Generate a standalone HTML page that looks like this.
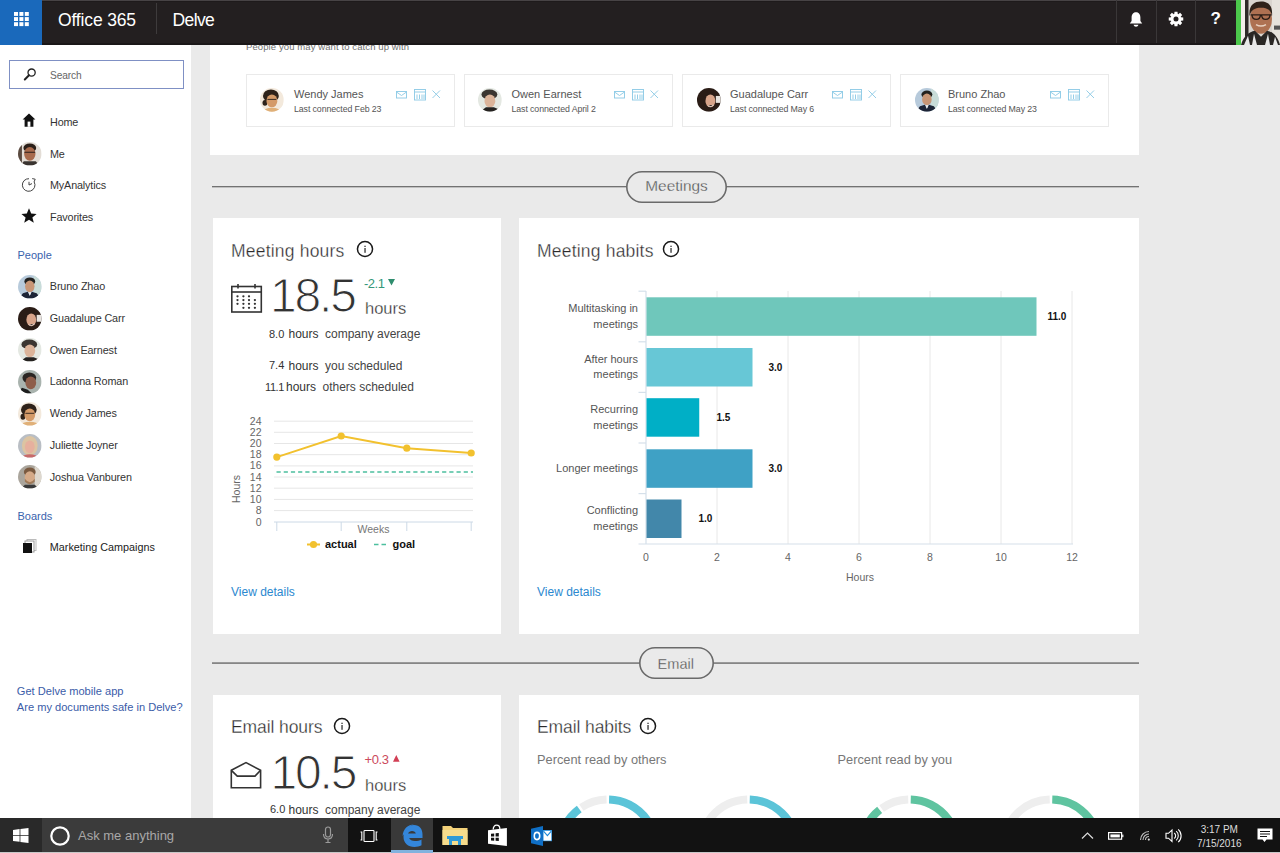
<!DOCTYPE html>
<html><head><meta charset="utf-8"><title>Delve</title>
<style>
*{margin:0;padding:0;box-sizing:border-box}
html,body{width:1280px;height:853px;overflow:hidden}
body{position:relative;background:#eaeaea;font-family:"Liberation Sans",sans-serif}
.t{position:absolute;white-space:nowrap;line-height:1}
.r{position:absolute}
svg{position:absolute;overflow:visible}
</style></head><body>
<div class="r" style="left:0px;top:44px;width:191px;height:809px;background:#ffffff;"></div>
<div class="r" style="left:210px;top:44px;width:929px;height:111px;background:#ffffff;"></div>
<div class="t" style="left:246.00px;top:42px;font-size:9.5px;color:#707070;letter-spacing:0.1px;">People you may want to catch up with</div>
<div class="r" style="left:246px;top:74px;width:209px;height:53px;background:#ffffff;border:1px solid #eaeaea;"></div>
<svg style="left:259.6px;top:88.0px" width="23.8" height="23.8" viewBox="0 0 24 24"><defs><clipPath id="c1"><circle cx="12" cy="12" r="12"/></clipPath></defs><g clip-path="url(#c1)"><rect width="24" height="24" fill="#f3e9dc"/><ellipse cx="11" cy="8" rx="8" ry="6.5" fill="#2e221a"/><ellipse cx="5" cy="15" rx="2.5" ry="3" fill="#2e221a"/><ellipse cx="12" cy="13" rx="5.5" ry="6.5" fill="#d49a68"/><path d="M7.5 11.5 H16.5" stroke="#3a2a20" stroke-width="1"/><ellipse cx="12" cy="24" rx="9" ry="4" fill="#e0b078"/></g></svg>
<div class="t" style="left:294.00px;top:89px;font-size:11px;color:#555;">Wendy James</div>
<div class="t" style="left:294.00px;top:105px;font-size:8.8px;color:#555;letter-spacing:-0.1px;">Last connected Feb 23</div>
<svg style="left:396px;top:89px" width="46" height="12" viewBox="0 0 46 12">
<g fill="none" stroke="#8fcbe6" stroke-width="0.95">
<rect x="0.5" y="2.5" width="10" height="6.5"/><path d="M0.5 3 L5.5 6.5 L10.5 3"/>
<rect x="18.5" y="0.5" width="11" height="10.5"/><path d="M18.5 3 H29.5 M21 5.5 V10 M23.5 5.5 V10 M26 5.5 V10 M28 5.5V10"/>
<path d="M36.5 1.5 L44 9 M44 1.5 L36.5 9"/>
</g></svg>
<div class="r" style="left:463.5px;top:74px;width:209px;height:53px;background:#ffffff;border:1px solid #eaeaea;"></div>
<svg style="left:478.3px;top:88.0px" width="23.8" height="23.8" viewBox="0 0 24 24"><defs><clipPath id="c2"><circle cx="12" cy="12" r="12"/></clipPath></defs><g clip-path="url(#c2)"><rect width="24" height="24" fill="#e4e8e2"/><ellipse cx="11.5" cy="6.5" rx="8" ry="5" fill="#3b3631"/><ellipse cx="12" cy="13" rx="5.5" ry="6.5" fill="#dcb49a"/><path d="M2 24 L8 19.5 H16 L22 22 V24Z" fill="#252220"/></g></svg>
<div class="t" style="left:511.50px;top:89px;font-size:11px;color:#555;">Owen Earnest</div>
<div class="t" style="left:511.50px;top:105px;font-size:8.8px;color:#555;letter-spacing:-0.1px;">Last connected April 2</div>
<svg style="left:613.5px;top:89px" width="46" height="12" viewBox="0 0 46 12">
<g fill="none" stroke="#8fcbe6" stroke-width="0.95">
<rect x="0.5" y="2.5" width="10" height="6.5"/><path d="M0.5 3 L5.5 6.5 L10.5 3"/>
<rect x="18.5" y="0.5" width="11" height="10.5"/><path d="M18.5 3 H29.5 M21 5.5 V10 M23.5 5.5 V10 M26 5.5 V10 M28 5.5V10"/>
<path d="M36.5 1.5 L44 9 M44 1.5 L36.5 9"/>
</g></svg>
<div class="r" style="left:682px;top:74px;width:209px;height:53px;background:#ffffff;border:1px solid #eaeaea;"></div>
<svg style="left:697.1px;top:88.0px" width="23.8" height="23.8" viewBox="0 0 24 24"><defs><clipPath id="c3"><circle cx="12" cy="12" r="12"/></clipPath></defs><g clip-path="url(#c3)"><rect width="24" height="24" fill="#2a1c16"/><ellipse cx="13.5" cy="13" rx="5" ry="6.5" fill="#d8a48a"/><rect x="19" y="8" width="5" height="7" fill="#e8e4e0"/><path d="M11 18 Q14 20 17 17" stroke="#f0e0d8" stroke-width="1"/></g></svg>
<div class="t" style="left:730.00px;top:89px;font-size:11px;color:#555;">Guadalupe Carr</div>
<div class="t" style="left:730.00px;top:105px;font-size:8.8px;color:#555;letter-spacing:-0.1px;">Last connected May 6</div>
<svg style="left:832px;top:89px" width="46" height="12" viewBox="0 0 46 12">
<g fill="none" stroke="#8fcbe6" stroke-width="0.95">
<rect x="0.5" y="2.5" width="10" height="6.5"/><path d="M0.5 3 L5.5 6.5 L10.5 3"/>
<rect x="18.5" y="0.5" width="11" height="10.5"/><path d="M18.5 3 H29.5 M21 5.5 V10 M23.5 5.5 V10 M26 5.5 V10 M28 5.5V10"/>
<path d="M36.5 1.5 L44 9 M44 1.5 L36.5 9"/>
</g></svg>
<div class="r" style="left:900px;top:74px;width:209px;height:53px;background:#ffffff;border:1px solid #eaeaea;"></div>
<svg style="left:914.7px;top:88.0px" width="23.8" height="23.8" viewBox="0 0 24 24"><defs><clipPath id="c4"><circle cx="12" cy="12" r="12"/></clipPath></defs><g clip-path="url(#c4)"><rect width="24" height="24" fill="#b7cadb"/><rect x="16" y="0" width="8" height="24" fill="#c8dcd8"/><ellipse cx="12" cy="6.5" rx="5.5" ry="4" fill="#22211f"/><ellipse cx="12" cy="11.5" rx="4.8" ry="6" fill="#c89676"/><path d="M1 24 L5 18.5 L10 17 L12 21 L14 17 L19 18.5 L23 24Z" fill="#1d2436"/><path d="M10.5 17.5 L12 21 L13.5 17.5Z" fill="#eee"/></g></svg>
<div class="t" style="left:948.00px;top:89px;font-size:11px;color:#555;">Bruno Zhao</div>
<div class="t" style="left:948.00px;top:105px;font-size:8.8px;color:#555;letter-spacing:-0.1px;">Last connected May 23</div>
<svg style="left:1050px;top:89px" width="46" height="12" viewBox="0 0 46 12">
<g fill="none" stroke="#8fcbe6" stroke-width="0.95">
<rect x="0.5" y="2.5" width="10" height="6.5"/><path d="M0.5 3 L5.5 6.5 L10.5 3"/>
<rect x="18.5" y="0.5" width="11" height="10.5"/><path d="M18.5 3 H29.5 M21 5.5 V10 M23.5 5.5 V10 M26 5.5 V10 M28 5.5V10"/>
<path d="M36.5 1.5 L44 9 M44 1.5 L36.5 9"/>
</g></svg>
<div class="r" style="left:212px;top:186px;width:927px;height:1px;background:#727272;"></div>
<div class="r" style="left:212px;top:187px;width:927px;height:1px;background:#c0c0c0;"></div>
<svg style="left:626px;top:170.5px" width="101" height="32" viewBox="0 0 101 32"><rect x="0.8" y="0.8" width="99.4" height="30.4" rx="15.2" fill="#eaeaea" stroke="#6a6a6a" stroke-width="1.6"/></svg>
<div class="t" style="left:645.30px;top:178px;font-size:15.4px;color:#4a4a4a;-webkit-text-stroke:0.3px #eaeaea;">Meetings</div>
<div class="r" style="left:212px;top:662px;width:927px;height:1px;background:#9a9a9a;"></div>
<div class="r" style="left:212px;top:663px;width:927px;height:1px;background:#868686;"></div>
<svg style="left:639px;top:646.7px" width="75" height="32" viewBox="0 0 75 32"><rect x="0.8" y="0.8" width="73.4" height="30.4" rx="15.2" fill="#eaeaea" stroke="#6a6a6a" stroke-width="1.6"/></svg>
<div class="t" style="left:657.50px;top:657px;font-size:14.6px;color:#4a4a4a;-webkit-text-stroke:0.3px #eaeaea;">Email</div>
<div class="r" style="left:213px;top:218px;width:288px;height:416px;background:#ffffff;"></div>
<div class="r" style="left:519px;top:218px;width:620px;height:416px;background:#ffffff;"></div>
<div class="r" style="left:213px;top:695px;width:288px;height:160px;background:#ffffff;"></div>
<div class="r" style="left:519px;top:695px;width:620px;height:160px;background:#ffffff;"></div>
<div class="t" style="left:231.00px;top:243px;font-size:17.5px;color:#2a2a2a;letter-spacing:0.2px;-webkit-text-stroke:0.3px #fff;">Meeting hours</div>
<svg style="left:355.5px;top:240px" width="18" height="18" viewBox="0 0 18 18">
<circle cx="9" cy="9" r="7.55" fill="none" stroke="#1a1a1a" stroke-width="1.5"/>
<rect x="8.45" y="8" width="1.15" height="4.8" fill="#1a1a1a"/><rect x="8.45" y="5.7" width="1.15" height="1.3" fill="#1a1a1a"/>
</svg>
<svg style="left:230px;top:283px" width="34" height="32" viewBox="0 0 34 32">
<g fill="none" stroke="#333" stroke-width="1.6">
<rect x="1.8" y="3.5" width="29.5" height="25.5"/>
<path d="M1.8 9 H31.3"/>
<path d="M8 1 V5.5 M25 1 V5.5"/>
</g>
<g fill="#333">
<circle cx="7.5" cy="13.3" r="1.15"/><circle cx="13.4" cy="13.3" r="1.15"/><circle cx="19" cy="13.3" r="1.15"/><circle cx="7.5" cy="17.1" r="1.15"/><circle cx="13.4" cy="17.1" r="1.15"/><circle cx="19" cy="17.1" r="1.15"/><circle cx="24.9" cy="17.1" r="1.15"/><circle cx="7.5" cy="20.8" r="1.15"/><circle cx="13.4" cy="20.8" r="1.15"/><circle cx="19" cy="20.8" r="1.15"/><circle cx="24.9" cy="20.8" r="1.15"/><circle cx="13.4" cy="24.8" r="1.15"/><circle cx="19" cy="24.8" r="1.15"/><circle cx="24.9" cy="24.8" r="1.15"/>
</g></svg>
<div class="t" style="left:270.00px;top:272px;font-size:48px;color:#333;letter-spacing:-2.2px;-webkit-text-stroke:1.1px #fff;">18.5</div>
<div class="t" style="left:364.00px;top:277px;font-size:13px;color:#34977a;letter-spacing:-0.5px;">-2.1</div>
<svg style="left:388.3px;top:279.2px" width="7" height="6.5" viewBox="0 0 7 6.5"><path d="M0 0 H7 L3.5 6.5Z" fill="#2f8d6e"/></svg>
<div class="t" style="left:365.00px;top:300px;font-size:16.5px;color:#2a2a2a;-webkit-text-stroke:0.3px #fff;">hours</div>
<div class="t" style="left:269.00px;top:329px;font-size:11px;color:#333;">8.0</div>
<div class="t" style="left:288.50px;top:328px;font-size:12px;color:#333;">hours</div>
<div class="t" style="left:325.00px;top:328px;font-size:12px;color:#444;">company average</div>
<div class="t" style="left:269.00px;top:360px;font-size:11px;color:#333;">7.4</div>
<div class="t" style="left:288.50px;top:360px;font-size:12px;color:#333;">hours</div>
<div class="t" style="left:325.00px;top:360px;font-size:12px;color:#444;">you scheduled</div>
<div class="t" style="left:265.00px;top:382px;font-size:11px;color:#333;letter-spacing:-0.4px;">11.1</div>
<div class="t" style="left:286.00px;top:381px;font-size:12px;color:#333;">hours</div>
<div class="t" style="left:322.50px;top:381px;font-size:12px;color:#444;">others scheduled</div>
<svg style="left:0px;top:0px" width="1" height="1">
<path d="M274 421.2 H473" stroke="#e6e6e6" stroke-width="1"/>
<path d="M274 432.3 H473" stroke="#e6e6e6" stroke-width="1"/>
<path d="M274 443.5 H473" stroke="#e6e6e6" stroke-width="1"/>
<path d="M274 454.7 H473" stroke="#e6e6e6" stroke-width="1"/>
<path d="M274 465.9 H473" stroke="#e6e6e6" stroke-width="1"/>
<path d="M274 477.0 H473" stroke="#e6e6e6" stroke-width="1"/>
<path d="M274 488.2 H473" stroke="#e6e6e6" stroke-width="1"/>
<path d="M274 499.4 H473" stroke="#e6e6e6" stroke-width="1"/>
<path d="M274 510.6 H473" stroke="#e6e6e6" stroke-width="1"/>
<path d="M274 522 H473" stroke="#ccd9e6" stroke-width="1"/>
<path d="M276.8 522 V531" stroke="#ccd9e6" stroke-width="1"/>
<path d="M341.2 522 V531" stroke="#ccd9e6" stroke-width="1"/>
<path d="M406.8 522 V531" stroke="#ccd9e6" stroke-width="1"/>
<path d="M471.2 522 V531" stroke="#ccd9e6" stroke-width="1"/>
<path d="M276.5 472 H473" stroke="#4cbf9e" stroke-width="1.6" stroke-dasharray="4.2 3"/>
<polyline points="276.8,457.1 341.2,436 406.8,448.2 471.2,453" fill="none" stroke="#f2c12e" stroke-width="2"/>
<circle cx="276.8" cy="457.1" r="3.6" fill="#f2c12e"/>
<circle cx="341.2" cy="436" r="3.6" fill="#f2c12e"/>
<circle cx="406.8" cy="448.2" r="3.6" fill="#f2c12e"/>
<circle cx="471.2" cy="453" r="3.6" fill="#f2c12e"/>
<path d="M307 544.5 H320" stroke="#f2c12e" stroke-width="2"/><circle cx="313.5" cy="544.5" r="3.6" fill="#f2c12e"/>
<path d="M374 544.5 H387" stroke="#4cbf9e" stroke-width="1.6" stroke-dasharray="4.5 3"/>
</svg>
<div class="t" style="right:1018.50px;top:416px;font-size:10.5px;color:#666;text-align:right;">24</div>
<div class="t" style="right:1018.50px;top:427px;font-size:10.5px;color:#666;text-align:right;">22</div>
<div class="t" style="right:1018.50px;top:438px;font-size:10.5px;color:#666;text-align:right;">20</div>
<div class="t" style="right:1018.50px;top:449px;font-size:10.5px;color:#666;text-align:right;">18</div>
<div class="t" style="right:1018.50px;top:460px;font-size:10.5px;color:#666;text-align:right;">16</div>
<div class="t" style="right:1018.50px;top:472px;font-size:10.5px;color:#666;text-align:right;">14</div>
<div class="t" style="right:1018.50px;top:483px;font-size:10.5px;color:#666;text-align:right;">12</div>
<div class="t" style="right:1018.50px;top:494px;font-size:10.5px;color:#666;text-align:right;">10</div>
<div class="t" style="right:1018.50px;top:505px;font-size:10.5px;color:#666;text-align:right;">8</div>
<div class="t" style="right:1018.50px;top:517px;font-size:10.5px;color:#666;text-align:right;">0</div>
<div class="t" style="left:173.50px;width:400px;text-align:center;top:524px;font-size:10.5px;color:#777;">Weeks</div>
<div class="t" style="left:216px;top:482px;width:40px;text-align:center;font-size:10.5px;color:#666;transform:rotate(-90deg);transform-origin:20px 7px;top:482px;margin-left:2px;">Hours</div>
<div class="t" style="left:325.00px;top:539px;font-size:11px;color:#111;font-weight:bold;">actual</div>
<div class="t" style="left:392.50px;top:539px;font-size:11px;color:#111;font-weight:bold;">goal</div>
<div class="t" style="left:231.00px;top:586px;font-size:12px;color:#2b88cf;">View details</div>
<div class="t" style="left:537.00px;top:243px;font-size:17.5px;color:#2a2a2a;letter-spacing:0.2px;-webkit-text-stroke:0.3px #fff;">Meeting habits</div>
<svg style="left:662px;top:240px" width="18" height="18" viewBox="0 0 18 18">
<circle cx="9" cy="9" r="7.55" fill="none" stroke="#1a1a1a" stroke-width="1.5"/>
<rect x="8.45" y="8" width="1.15" height="4.8" fill="#1a1a1a"/><rect x="8.45" y="5.7" width="1.15" height="1.3" fill="#1a1a1a"/>
</svg>
<svg style="left:0;top:0" width="1" height="1">
<path d="M717.0 291 V544" stroke="#e8e8e8" stroke-width="1"/>
<path d="M788.0 291 V544" stroke="#e8e8e8" stroke-width="1"/>
<path d="M859.0 291 V544" stroke="#e8e8e8" stroke-width="1"/>
<path d="M930.0 291 V544" stroke="#e8e8e8" stroke-width="1"/>
<path d="M1001.0 291 V544" stroke="#e8e8e8" stroke-width="1"/>
<path d="M1072.0 291 V544" stroke="#e8e8e8" stroke-width="1"/>
<path d="M646 291 V544 M638.5 544 H1073" stroke="#d5e0ea" stroke-width="1.2"/>
<path d="M638.5 291.2 H646" stroke="#d5e0ea" stroke-width="1.2"/>
<path d="M638.5 341.8 H646" stroke="#d5e0ea" stroke-width="1.2"/>
<path d="M638.5 392.4 H646" stroke="#d5e0ea" stroke-width="1.2"/>
<path d="M638.5 443 H646" stroke="#d5e0ea" stroke-width="1.2"/>
<path d="M638.5 493.6 H646" stroke="#d5e0ea" stroke-width="1.2"/>
<rect x="646.5" y="297.3" width="390.0" height="38.5" fill="#6fc7bb"/>
<rect x="646.5" y="348" width="106.0" height="38.5" fill="#67c7d6"/>
<rect x="646.5" y="398.2" width="52.75" height="38.5" fill="#00afc6"/>
<rect x="646.5" y="449.3" width="106.0" height="38.5" fill="#3fa1c5"/>
<rect x="646.5" y="499.5" width="35.0" height="38.5" fill="#4287aa"/>
</svg>
<div class="t" style="left:1047.50px;top:312px;font-size:10px;color:#111;font-weight:bold;">11.0</div>
<div class="t" style="left:768.50px;top:363px;font-size:10px;color:#111;font-weight:bold;">3.0</div>
<div class="t" style="left:716.50px;top:413px;font-size:10px;color:#111;font-weight:bold;">1.5</div>
<div class="t" style="left:768.50px;top:464px;font-size:10px;color:#111;font-weight:bold;">3.0</div>
<div class="t" style="left:698.50px;top:514px;font-size:10px;color:#111;font-weight:bold;">1.0</div>
<div class="t" style="right:642.00px;top:303px;font-size:11px;color:#555;text-align:right;">Multitasking in</div>
<div class="t" style="right:642.00px;top:319px;font-size:11px;color:#555;text-align:right;">meetings</div>
<div class="t" style="right:642.00px;top:354px;font-size:11px;color:#555;text-align:right;">After hours</div>
<div class="t" style="right:642.00px;top:369px;font-size:11px;color:#555;text-align:right;">meetings</div>
<div class="t" style="right:642.00px;top:404px;font-size:11px;color:#555;text-align:right;">Recurring</div>
<div class="t" style="right:642.00px;top:420px;font-size:11px;color:#555;text-align:right;">meetings</div>
<div class="t" style="right:642.00px;top:463px;font-size:11px;color:#555;text-align:right;">Longer meetings</div>
<div class="t" style="right:642.00px;top:505px;font-size:11px;color:#555;text-align:right;">Conflicting</div>
<div class="t" style="right:642.00px;top:521px;font-size:11px;color:#555;text-align:right;">meetings</div>
<div class="t" style="left:446.00px;width:400px;text-align:center;top:552px;font-size:10.5px;color:#666;">0</div>
<div class="t" style="left:517.00px;width:400px;text-align:center;top:552px;font-size:10.5px;color:#666;">2</div>
<div class="t" style="left:588.00px;width:400px;text-align:center;top:552px;font-size:10.5px;color:#666;">4</div>
<div class="t" style="left:659.00px;width:400px;text-align:center;top:552px;font-size:10.5px;color:#666;">6</div>
<div class="t" style="left:730.00px;width:400px;text-align:center;top:552px;font-size:10.5px;color:#666;">8</div>
<div class="t" style="left:801.00px;width:400px;text-align:center;top:552px;font-size:10.5px;color:#666;">10</div>
<div class="t" style="left:872.00px;width:400px;text-align:center;top:552px;font-size:10.5px;color:#666;">12</div>
<div class="t" style="left:660.00px;width:400px;text-align:center;top:572px;font-size:10.5px;color:#666;">Hours</div>
<div class="t" style="left:537.00px;top:586px;font-size:12px;color:#2b88cf;">View details</div>
<div class="t" style="left:231.00px;top:719px;font-size:17.5px;color:#2a2a2a;letter-spacing:-0.1px;-webkit-text-stroke:0.3px #fff;">Email hours</div>
<svg style="left:332.5px;top:716.5px" width="18" height="18" viewBox="0 0 18 18">
<circle cx="9" cy="9" r="7.55" fill="none" stroke="#1a1a1a" stroke-width="1.5"/>
<rect x="8.45" y="8" width="1.15" height="4.8" fill="#1a1a1a"/><rect x="8.45" y="5.7" width="1.15" height="1.3" fill="#1a1a1a"/>
</svg>
<svg style="left:229px;top:760px" width="34" height="30" viewBox="0 0 34 30">
<g fill="none" stroke="#333" stroke-width="1.6" stroke-linejoin="miter">
<path d="M2.3 10.3 L17 2.6 L31.6 10.3 V27.7 H2.3 Z"/>
<path d="M2.3 10.3 L8.3 16.1 H26 L31.6 10.3"/>
</g></svg>
<div class="t" style="left:270.50px;top:749px;font-size:48px;color:#333;letter-spacing:-2.2px;-webkit-text-stroke:1.1px #fff;">10.5</div>
<div class="t" style="left:364.50px;top:753px;font-size:13px;color:#cc4a5c;letter-spacing:-0.4px;">+0.3</div>
<svg style="left:392.6px;top:754.5px" width="6.6" height="6.8" viewBox="0 0 6.6 6.8"><path d="M3.3 0 L6.6 6.8 H0Z" fill="#d23f55"/></svg>
<div class="t" style="left:365.00px;top:777px;font-size:16.5px;color:#2a2a2a;-webkit-text-stroke:0.3px #fff;">hours</div>
<div class="t" style="left:270.00px;top:804px;font-size:11px;color:#333;">6.0</div>
<div class="t" style="left:288.50px;top:804px;font-size:12px;color:#333;">hours</div>
<div class="t" style="left:325.00px;top:804px;font-size:12px;color:#444;">company average</div>
<div class="t" style="left:537.00px;top:719px;font-size:17.5px;color:#2a2a2a;letter-spacing:-0.1px;-webkit-text-stroke:0.3px #fff;">Email habits</div>
<svg style="left:638.8px;top:717px" width="18" height="18" viewBox="0 0 18 18">
<circle cx="9" cy="9" r="7.55" fill="none" stroke="#1a1a1a" stroke-width="1.5"/>
<rect x="8.45" y="8" width="1.15" height="4.8" fill="#1a1a1a"/><rect x="8.45" y="5.7" width="1.15" height="1.3" fill="#1a1a1a"/>
</svg>
<div class="t" style="left:537.00px;top:754px;font-size:12.8px;color:#777;">Percent read by others</div>
<div class="t" style="left:837.50px;top:754px;font-size:12.8px;color:#777;">Percent read by you</div>
<svg style="left:0;top:0" width="1" height="1">
<path d="M581.31 807.47 A48 48 0 0 1 606.54 799.52" fill="none" stroke="#eeeeee" stroke-width="8"/>
<path d="M609.06 799.52 A48 48 0 1 1 579.25 808.91" fill="none" stroke="#5bc4d8" stroke-width="8"/>
<path d="M701.03 854.59 A48 48 0 0 1 747.24 799.52" fill="none" stroke="#eeeeee" stroke-width="8"/>
<path d="M749.76 799.52 A48 48 0 1 1 701.46 857.07" fill="none" stroke="#5bc4d8" stroke-width="8"/>
<path d="M881.63 808.42 A48 48 0 0 1 908.24 799.52" fill="none" stroke="#eeeeee" stroke-width="8"/>
<path d="M910.76 799.52 A48 48 0 1 1 879.62 809.93" fill="none" stroke="#5fc4a0" stroke-width="8"/>
<path d="M1003.53 854.59 A48 48 0 0 1 1049.74 799.52" fill="none" stroke="#eeeeee" stroke-width="8"/>
<path d="M1052.26 799.52 A48 48 0 1 1 1003.96 857.07" fill="none" stroke="#5fc4a0" stroke-width="8"/>
</svg>
<div class="r" style="left:9px;top:60px;width:175px;height:29px;background:transparent;border:1.3px solid #7f90c4;"></div>
<svg style="left:22px;top:66px" width="16" height="16" viewBox="0 0 16 16">
<circle cx="9.6" cy="6.6" r="3.6" fill="none" stroke="#222" stroke-width="1.3"/>
<path d="M7 9.3 L2.8 13.5" stroke="#222" stroke-width="2" stroke-linecap="round"/>
</svg>
<div class="t" style="left:50.00px;top:71px;font-size:10.2px;color:#666;letter-spacing:-0.1px;">Search</div>
<svg style="left:21px;top:112px" width="16" height="16" viewBox="0 0 16 16">
<path d="M8 1.5 L1.6 7.6 H3.6 V14.8 H12.4 V7.6 H14.4 Z" fill="#111"/>
<rect x="6.6" y="9.6" width="2.8" height="5.2" fill="#fff"/>
</svg>
<div class="t" style="left:50.00px;top:117px;font-size:10.8px;color:#333;letter-spacing:-0.15px;">Home</div>
<svg style="left:18.2px;top:142.0px" width="23.6" height="23.6" viewBox="0 0 24 24"><defs><clipPath id="c5"><circle cx="12" cy="12" r="12"/></clipPath></defs><g clip-path="url(#c5)"><rect width="24" height="24" fill="#e3ddd6"/><rect x="0" y="0" width="4" height="24" fill="#5a4a40"/><ellipse cx="12" cy="6" rx="6.5" ry="4.5" fill="#2b1f18"/><ellipse cx="12" cy="12" rx="5.8" ry="7" fill="#a86a4c"/><path d="M6.5 10.5 H17.5" stroke="#2a1e18" stroke-width="1.1"/><path d="M2 24 L6 19.5 H18 L22 24Z" fill="#3a3430"/></g></svg>
<div class="t" style="left:50.00px;top:149px;font-size:10.8px;color:#333;letter-spacing:-0.15px;">Me</div>
<svg style="left:20px;top:176px" width="18" height="18" viewBox="0 0 18 18">
<path d="M14.2 6 A6.3 6.3 0 1 1 9 2.7" fill="none" stroke="#444" stroke-width="1"/>
<path d="M9 9 L9 5.8 M9 9 L12 7.6" stroke="#444" stroke-width="1"/>
<path d="M12.2 2.6 L15.2 3.2 L14 6" fill="none" stroke="#444" stroke-width="1"/>
</svg>
<div class="t" style="left:50.00px;top:180px;font-size:10.8px;color:#333;letter-spacing:-0.15px;">MyAnalytics</div>
<svg style="left:20px;top:207px" width="18" height="18" viewBox="0 0 18 18">
<path d="M9 1.3 L11.2 6.6 L16.6 6.9 L12.4 10.4 L13.8 15.8 L9 12.8 L4.2 15.8 L5.6 10.4 L1.4 6.9 L6.8 6.6 Z" fill="#111"/>
</svg>
<div class="t" style="left:50.00px;top:212px;font-size:10.8px;color:#333;letter-spacing:-0.15px;">Favorites</div>
<div class="t" style="left:17.50px;top:250px;font-size:11px;color:#3a63ad;">People</div>
<svg style="left:17.8px;top:275.0px" width="23.6" height="23.6" viewBox="0 0 24 24"><defs><clipPath id="c6"><circle cx="12" cy="12" r="12"/></clipPath></defs><g clip-path="url(#c6)"><rect width="24" height="24" fill="#b7cadb"/><rect x="16" y="0" width="8" height="24" fill="#c8dcd8"/><ellipse cx="12" cy="6.5" rx="5.5" ry="4" fill="#22211f"/><ellipse cx="12" cy="11.5" rx="4.8" ry="6" fill="#c89676"/><path d="M1 24 L5 18.5 L10 17 L12 21 L14 17 L19 18.5 L23 24Z" fill="#1d2436"/><path d="M10.5 17.5 L12 21 L13.5 17.5Z" fill="#eee"/></g></svg>
<div class="t" style="left:49.80px;top:281px;font-size:10.8px;color:#333;letter-spacing:-0.12px;">Bruno Zhao</div>
<svg style="left:17.8px;top:306.7px" width="23.6" height="23.6" viewBox="0 0 24 24"><defs><clipPath id="c7"><circle cx="12" cy="12" r="12"/></clipPath></defs><g clip-path="url(#c7)"><rect width="24" height="24" fill="#2a1c16"/><ellipse cx="13.5" cy="13" rx="5" ry="6.5" fill="#d8a48a"/><rect x="19" y="8" width="5" height="7" fill="#e8e4e0"/><path d="M11 18 Q14 20 17 17" stroke="#f0e0d8" stroke-width="1"/></g></svg>
<div class="t" style="left:49.80px;top:313px;font-size:10.8px;color:#333;letter-spacing:-0.12px;">Guadalupe Carr</div>
<svg style="left:17.8px;top:338.4px" width="23.6" height="23.6" viewBox="0 0 24 24"><defs><clipPath id="c8"><circle cx="12" cy="12" r="12"/></clipPath></defs><g clip-path="url(#c8)"><rect width="24" height="24" fill="#e4e8e2"/><ellipse cx="11.5" cy="6.5" rx="8" ry="5" fill="#3b3631"/><ellipse cx="12" cy="13" rx="5.5" ry="6.5" fill="#dcb49a"/><path d="M2 24 L8 19.5 H16 L22 22 V24Z" fill="#252220"/></g></svg>
<div class="t" style="left:49.80px;top:345px;font-size:10.8px;color:#333;letter-spacing:-0.12px;">Owen Earnest</div>
<svg style="left:17.8px;top:370.09999999999997px" width="23.6" height="23.6" viewBox="0 0 24 24"><defs><clipPath id="c9"><circle cx="12" cy="12" r="12"/></clipPath></defs><g clip-path="url(#c9)"><rect width="24" height="24" fill="#a9b3ae"/><ellipse cx="11.5" cy="8" rx="7" ry="5.5" fill="#2a2623"/><ellipse cx="13" cy="13" rx="5.5" ry="6.5" fill="#8e5e4a"/><path d="M0 24 L4 18 L10 20 L14 24Z" fill="#1e1e1e"/></g></svg>
<div class="t" style="left:49.80px;top:376px;font-size:10.8px;color:#333;letter-spacing:-0.12px;">Ladonna Roman</div>
<svg style="left:17.8px;top:401.8px" width="23.6" height="23.6" viewBox="0 0 24 24"><defs><clipPath id="c10"><circle cx="12" cy="12" r="12"/></clipPath></defs><g clip-path="url(#c10)"><rect width="24" height="24" fill="#f3e9dc"/><ellipse cx="11" cy="8" rx="8" ry="6.5" fill="#2e221a"/><ellipse cx="5" cy="15" rx="2.5" ry="3" fill="#2e221a"/><ellipse cx="12" cy="13" rx="5.5" ry="6.5" fill="#d49a68"/><path d="M7.5 11.5 H16.5" stroke="#3a2a20" stroke-width="1"/><ellipse cx="12" cy="24" rx="9" ry="4" fill="#e0b078"/></g></svg>
<div class="t" style="left:49.80px;top:408px;font-size:10.8px;color:#333;letter-spacing:-0.12px;">Wendy James</div>
<svg style="left:17.8px;top:433.5px" width="23.6" height="23.6" viewBox="0 0 24 24"><defs><clipPath id="c11"><circle cx="12" cy="12" r="12"/></clipPath></defs><g clip-path="url(#c11)"><rect width="24" height="24" fill="#b9bec4"/><ellipse cx="12" cy="12" rx="8" ry="10" fill="#dcc4a2"/><ellipse cx="12" cy="13" rx="5" ry="6.5" fill="#e6b09e"/><ellipse cx="12" cy="24" rx="8" ry="3.5" fill="#c86a6a"/></g></svg>
<div class="t" style="left:49.80px;top:440px;font-size:10.8px;color:#333;letter-spacing:-0.12px;">Juliette Joyner</div>
<svg style="left:17.8px;top:465.2px" width="23.6" height="23.6" viewBox="0 0 24 24"><defs><clipPath id="c12"><circle cx="12" cy="12" r="12"/></clipPath></defs><g clip-path="url(#c12)"><rect width="24" height="24" fill="#aaa59c"/><rect x="17" y="0" width="7" height="24" fill="#ded8ce"/><ellipse cx="12" cy="7" rx="6" ry="4.5" fill="#7a5a40"/><ellipse cx="12" cy="12.5" rx="5.2" ry="6.2" fill="#d5aa88"/><path d="M7 14 Q12 21 17 14 V17 Q12 22 7 17Z" fill="#a07a58"/><path d="M3 24 L7 20 H17 L21 24Z" fill="#3a3a3a"/></g></svg>
<div class="t" style="left:49.80px;top:472px;font-size:10.8px;color:#333;letter-spacing:-0.12px;">Joshua Vanburen</div>
<div class="t" style="left:17.50px;top:511px;font-size:11px;color:#3a63ad;">Boards</div>
<svg style="left:22px;top:538px" width="16" height="17" viewBox="0 0 16 17">
<rect x="5" y="1.5" width="9" height="11" fill="none" stroke="#bbb" stroke-width="1"/>
<rect x="3" y="3" width="9" height="11" fill="#fff" stroke="#999" stroke-width="1"/>
<rect x="1" y="5" width="9" height="10" fill="#111"/>
</svg>
<div class="t" style="left:49.80px;top:542px;font-size:10.8px;color:#222;">Marketing Campaigns</div>
<div class="t" style="left:16.80px;top:686px;font-size:11.1px;color:#3a5ca8;">Get Delve mobile app</div>
<div class="t" style="left:16.80px;top:702px;font-size:11.1px;color:#3a5ca8;">Are my documents safe in Delve?</div>
<div class="r" style="left:0px;top:0px;width:1280px;height:45px;background:#231f20;"></div>
<div class="r" style="left:0px;top:43px;width:1280px;height:2px;background:#1a1718;"></div>
<div class="r" style="left:41px;top:0px;width:1195px;height:1px;background:#474345;"></div>
<div class="r" style="left:41px;top:1px;width:1195px;height:1px;background:#1e1a1b;"></div>
<div class="r" style="left:0px;top:0px;width:41.5px;height:45px;background:#1a69bb;"></div>
<svg style="left:14px;top:12px" width="16" height="15" viewBox="0 0 16 15"><rect x="0.0" y="0.0" width="4" height="3.9" fill="#fff"/><rect x="5.4" y="0.0" width="4" height="3.9" fill="#fff"/><rect x="10.8" y="0.0" width="4" height="3.9" fill="#fff"/><rect x="0.0" y="5.1" width="4" height="3.9" fill="#fff"/><rect x="5.4" y="5.1" width="4" height="3.9" fill="#fff"/><rect x="10.8" y="5.1" width="4" height="3.9" fill="#fff"/><rect x="0.0" y="10.2" width="4" height="3.9" fill="#fff"/><rect x="5.4" y="10.2" width="4" height="3.9" fill="#fff"/><rect x="10.8" y="10.2" width="4" height="3.9" fill="#fff"/></svg>
<div class="t" style="left:58.00px;top:12px;font-size:17.5px;color:#fff;letter-spacing:-0.15px;">Office 365</div>
<div class="r" style="left:156px;top:3px;width:1px;height:31px;background:#3e3b3c;"></div>
<div class="t" style="left:172.50px;top:12px;font-size:17.5px;color:#fff;letter-spacing:-0.6px;">Delve</div>
<div class="r" style="left:1116px;top:0px;width:1px;height:43px;background:#3a3738;"></div>
<div class="r" style="left:1156px;top:0px;width:1px;height:43px;background:#3a3738;"></div>
<div class="r" style="left:1195px;top:0px;width:1px;height:43px;background:#3a3738;"></div>
<svg style="left:1128px;top:11px" width="16" height="17" viewBox="0 0 16 17">
<path d="M8 1.2 C4.8 1.2 3.6 3.8 3.6 6.6 V10 L1.8 12.6 H14.2 L12.4 10 V6.6 C12.4 3.8 11.2 1.2 8 1.2 Z" fill="#fff"/>
<path d="M5.6 13.8 H10.4 C10.2 15 9.2 15.7 8 15.7 C6.8 15.7 5.8 15 5.6 13.8Z" fill="#fff"/>
</svg>
<svg style="left:1167.8px;top:11px" width="16" height="16" viewBox="0 0 16 16">
<path fill="#fff" fill-rule="evenodd" d="M6.23 3.00 L6.53 0.75 L9.47 0.75 L9.77 3.00 L10.28 3.22 L12.09 1.83 L14.17 3.91 L12.78 5.72 L13.00 6.23 L15.25 6.53 L15.25 9.47 L13.00 9.77 L12.78 10.28 L14.17 12.09 L12.09 14.17 L10.28 12.78 L9.77 13.00 L9.47 15.25 L6.53 15.25 L6.23 13.00 L5.72 12.78 L3.91 14.17 L1.83 12.09 L3.22 10.28 L3.00 9.77 L0.75 9.47 L0.75 6.53 L3.00 6.23 L3.22 5.72 L1.83 3.91 L3.91 1.83 L5.72 3.22 Z M10.5 8 A2.5 2.5 0 1 0 5.5 8 A2.5 2.5 0 1 0 10.5 8 Z"/>
</svg>
<div class="t" style="left:1015.60px;width:400px;text-align:center;top:10px;font-size:17px;color:#fff;font-weight:bold;">?</div>
<div class="r" style="left:1236px;top:0px;width:5px;height:45px;background:#4bc84b;"></div>
<svg style="left:1241px;top:0px" width="39" height="45" viewBox="0 0 39 44" preserveAspectRatio="none">
<rect width="39" height="44" fill="#d9d4ce"/>
<rect x="0" y="0" width="4" height="44" fill="#f2efea"/>
<rect x="4" y="0" width="3.5" height="36" fill="#2e2a28"/>
<rect x="31" y="0" width="8" height="44" fill="#e6e2dc"/>
<rect x="33" y="25" width="6" height="4" fill="#555"/>
<ellipse cx="20" cy="18.5" rx="11" ry="14.5" fill="#ae7152"/>
<path d="M8.5 16 C7.5 5 13 1.5 20 1.5 C27 1.5 32 5 31 16 C30 10 27 7.5 20 7.5 C13 7.5 10 10 8.5 16Z" fill="#2f2219"/>
<path d="M9.5 14.5 H30.5 M11 14.5 Q11 19 15.5 19 Q19 19 19.5 14.5 M20.5 14.5 Q21 19 24.5 19 Q29 19 29 14.5" fill="none" stroke="#2a1d16" stroke-width="1.3"/>
<path d="M15 24 Q20 27 25 24" stroke="#e8d0c0" stroke-width="1.4" fill="none"/>
<path d="M0 44 C2 36 8 31 14 30 L20 36 L26 30 C32 31 37 36 39 44 Z" fill="#2a2725"/>
<path d="M3 44 L7 35 L9 44Z M11 44 L13 33 L16 44Z M24 44 L27 33 L29 44Z M32 44 L34 36 L37 44Z" fill="#e8e8e8"/>
</svg>
<div class="r" style="left:0px;top:817.5px;width:1280px;height:34.5px;background:#121212;"></div>
<div class="r" style="left:0px;top:852px;width:1280px;height:1px;background:#c8c8c8;"></div>
<div class="r" style="left:0px;top:817.5px;width:42px;height:34.5px;background:#292929;"></div>
<div class="r" style="left:42px;top:817.5px;width:306px;height:34.5px;background:#3b3b3b;"></div>
<svg style="left:13px;top:828px" width="16" height="15" viewBox="0 0 16 15">
<path d="M0 2 L6.6 1.1 V7 H0 Z M7.4 1 L15.5 0 V7 H7.4 Z M0 7.8 H6.6 V13.8 L0 12.9 Z M7.4 7.8 H15.5 V14.9 L7.4 13.9Z" fill="#fff"/>
</svg>
<svg style="left:49px;top:825px" width="22" height="22" viewBox="0 0 22 22">
<circle cx="11" cy="11" r="8.7" fill="none" stroke="#fff" stroke-width="2.2"/>
</svg>
<div class="t" style="left:78.00px;top:829px;font-size:13px;color:#a8a8a8;">Ask me anything</div>
<svg style="left:322px;top:826px" width="12" height="18" viewBox="0 0 12 18">
<rect x="3.5" y="1" width="5" height="10" rx="2.5" fill="none" stroke="#9a9a9a" stroke-width="1.2"/>
<path d="M1.5 8 C1.5 11.5 3.5 13 6 13 C8.5 13 10.5 11.5 10.5 8 M6 13 V16.5 M3.5 16.5 H8.5" fill="none" stroke="#9a9a9a" stroke-width="1.2"/>
</svg>
<svg style="left:359px;top:827px" width="20" height="16" viewBox="0 0 20 16">
<rect x="5" y="3.5" width="10" height="11" rx="0.8" fill="none" stroke="#fff" stroke-width="1.1"/>
<path d="M1.5 5 H2.8 V13 H1.5 M18.5 5 H17.2 V13 H18.5" fill="none" stroke="#fff" stroke-width="1.1"/>
</svg>
<div class="r" style="left:391px;top:817.5px;width:42px;height:34.5px;background:#393939;"></div>
<div class="r" style="left:391px;top:850px;width:42px;height:3px;background:#82b2de;"></div>
<svg style="left:402px;top:824px" width="21" height="23" viewBox="0 0 21 23">
<path d="M20.5 14 H7.2 C7.8 16 10 17 13 17 C15.5 17 17.8 16.5 19.5 15.5 V21.3 C17.5 22.5 15 23 12.5 23 C6 23 1.5 19 1.5 13 C1.5 6 6 1 12 1 C17.5 1 20.5 5 20.5 10.5 Z" fill="#3486da"/>
<path d="M6 9.4 C6.5 7.8 8.3 6.9 10 6.9 C12 6.9 13.5 7.8 13.8 9.4 Z" fill="#393939"/>
<path d="M0.6 12 C1 5 6 0.6 12 0.6 C8 1.6 4.5 4.5 3 9 Z" fill="#3486da"/>
</svg>
<svg style="left:442px;top:824px" width="26" height="22" viewBox="0 0 26 22">
<path d="M0.5 2 H9 L11 4 H25.5 V21 H0.5 Z" fill="#f3d27a"/>
<rect x="0.5" y="6" width="25" height="15" fill="#f6dc8c"/>
<path d="M7 21 V14 H19 V21 H16 V17 H10 V21 Z" fill="#2e9ad8"/>
<rect x="5" y="12" width="16" height="3" fill="#2e9ad8"/>
</svg>
<svg style="left:487px;top:824px" width="21" height="23" viewBox="0 0 21 23">
<path d="M6.2 5.6 C6.2 2.8 7.6 1.2 9.6 1.2 C11.6 1.2 12.8 2.6 12.9 5" fill="none" stroke="#fff" stroke-width="1.3"/>
<path d="M1 6.3 L19.9 4 V22 L1 19.8 Z" fill="#fff"/>
<path d="M4 9.7 L7.2 9.4 V12.4 H4 Z M8.6 9.3 L11.8 9 V12.4 H8.6 Z M4 13.7 H7.2 V16.7 L4 16.4 Z M8.6 13.7 H11.8 V17.1 L8.6 16.8 Z" fill="#121212"/>
</svg>
<svg style="left:531px;top:826px" width="22" height="20" viewBox="0 0 22 20">
<path d="M11.5 4 H21 V15.2 H11.5 Z" fill="#1e88d8"/>
<path d="M12.5 4.8 H20.3 V14.6 H12.5 Z" fill="#fff"/>
<path d="M12.5 5.2 L16.4 9.6 L20.3 5.2" fill="none" stroke="#1e88d8" stroke-width="1.1"/>
<path d="M0 2.8 L12 0 V20 L0 17.2 Z" fill="#0f6fc6"/>
<ellipse cx="6" cy="10" rx="2.7" ry="3.6" fill="none" stroke="#fff" stroke-width="1.6"/>
</svg>
<svg style="left:1080px;top:827px" width="200" height="18" viewBox="0 0 200 18">
<path d="M2 11.5 L7.5 6 L13 11.5" fill="none" stroke="#ddd" stroke-width="1.2"/>
<rect x="28.6" y="5.6" width="13" height="6.6" fill="none" stroke="#fff" stroke-width="1.2"/>
<rect x="30.4" y="7.4" width="9.4" height="3" fill="#fff"/><rect x="42.2" y="7.6" width="1.2" height="2.6" fill="#fff"/>
<path d="M60.5 13 A8.5 8.5 0 0 1 69 4.5 M63 13 A6 6 0 0 1 69 7 M65.5 13 A3.5 3.5 0 0 1 69 9.5" fill="none" stroke="#bbb" stroke-width="1.1"/>
<circle cx="68.8" cy="12.6" r="1.1" fill="#ddd"/>
<path d="M86 6.3 H88.5 L92 3 V14.4 L88.5 11.2 H86 Z" fill="none" stroke="#fff" stroke-width="1.1"/>
<path d="M94.3 6 A3.5 3.5 0 0 1 94.3 11.5 M96.2 4.2 A6 6 0 0 1 96.2 13.3 M98.2 2.3 A8.6 8.6 0 0 1 98.2 15.2" fill="none" stroke="#fff" stroke-width="1.1"/>
</svg>
<div class="t" style="left:1019.30px;width:400px;text-align:center;top:825px;font-size:10px;color:#dcdcdc;">3:17 PM</div>
<div class="t" style="left:1019.30px;width:400px;text-align:center;top:839px;font-size:10px;color:#dcdcdc;">7/15/2016</div>
<svg style="left:1257px;top:828px" width="16" height="16" viewBox="0 0 16 16">
<path d="M0.5 0.5 H15.5 V11.5 H9.5 L7.5 14 L5.5 11.5 H0.5 Z" fill="#fff"/>
<path d="M3 3.5 H13 M3 6 H13 M3 8.5 H10" stroke="#121212" stroke-width="1"/>
</svg>
</body></html>
